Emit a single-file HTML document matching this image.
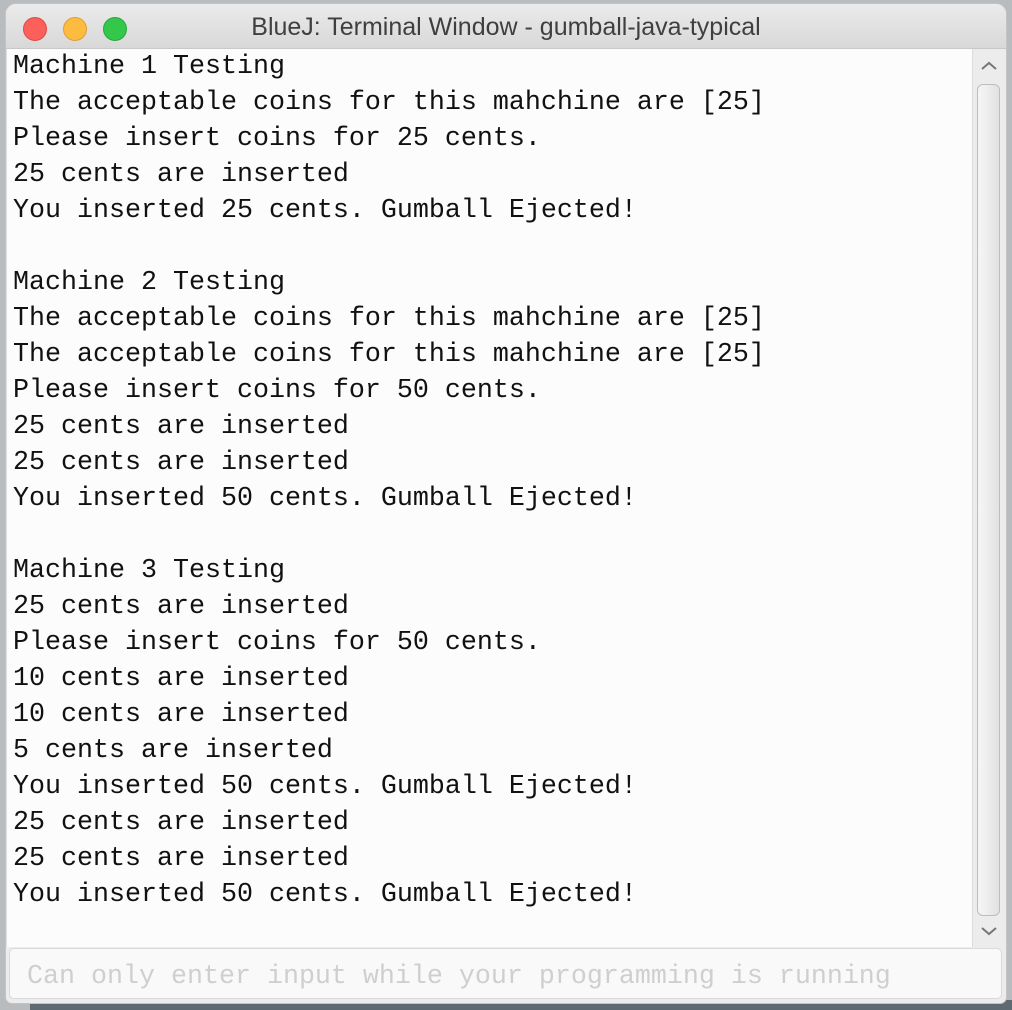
<!DOCTYPE html>
<html><head><style>
body{margin:0;width:1012px;height:1010px;background:#b9bcbf;position:relative;overflow:hidden;font-family:"Liberation Sans",sans-serif}
.bgb{position:absolute;left:30px;top:1000px;width:982px;height:10px;background:#5d6a72}
.win{position:absolute;left:6px;top:4px;width:1000px;height:999px;background:#ececec;border-radius:10px 10px 6px 6px;overflow:hidden;box-shadow:0 0 0 1px #c4c4c4}
.title{height:44px;background:linear-gradient(#ebebeb,#d8d8d8);border-bottom:1px solid #c8c8c8;text-align:center;line-height:46px;font-size:25px;color:#3f3f3f}
.dot{position:absolute;top:13px;width:22px;height:22px;border-radius:50%}
.term{position:absolute;left:0;top:45px;width:965px;height:898px;background:#fcfcfc;border-left:1px solid #ddd}
pre{margin:0;position:absolute;left:6px;top:0px;font-family:"Liberation Mono",monospace;font-size:26.67px;line-height:36px;color:#111}
.sb{position:absolute;left:966px;top:45px;width:32px;height:898px;background:#ececec;border-left:1px solid #ddd}
.thumb{position:absolute;left:4px;top:35px;width:21px;height:830px;border:1px solid #bdbdbd;border-radius:6px;background:linear-gradient(90deg,#f6f6f6,#e2e2e2)}
.inp{position:absolute;left:3px;top:944px;width:993px;height:51px;background:#f9f9f9;border:1px solid #dadada;border-radius:5px;font-family:"Liberation Mono",monospace;font-size:26.67px;color:#cfcfcf;line-height:56px;box-sizing:border-box;padding-left:17px}
</style></head><body>
<div class="bgb"></div>
<div class="win">
<div class="title">BlueJ: Terminal Window - gumball-java-typical</div>
<div class="dot" style="left:17px;background:#fc605b;border:1px solid #de4a45"></div>
<div class="dot" style="left:57px;background:#fdbc40;border:1px solid #dea034"></div>
<div class="dot" style="left:97px;background:#34c84a;border:1px solid #27a73a"></div>
<div class="term"><pre>Machine 1 Testing
The acceptable coins for this mahchine are [25]
Please insert coins for 25 cents.
25 cents are inserted
You inserted 25 cents. Gumball Ejected!

Machine 2 Testing
The acceptable coins for this mahchine are [25]
The acceptable coins for this mahchine are [25]
Please insert coins for 50 cents.
25 cents are inserted
25 cents are inserted
You inserted 50 cents. Gumball Ejected!

Machine 3 Testing
25 cents are inserted
Please insert coins for 50 cents.
10 cents are inserted
10 cents are inserted
5 cents are inserted
You inserted 50 cents. Gumball Ejected!
25 cents are inserted
25 cents are inserted
You inserted 50 cents. Gumball Ejected!</pre></div>
<div class="sb">
<svg style="position:absolute;left:8px;top:12px" width="16" height="10"><path d="M1 8 L8 2 L15 8" fill="none" stroke="#777" stroke-width="2"/></svg>
<div class="thumb"></div>
<svg style="position:absolute;left:8px;top:877px" width="16" height="10"><path d="M1 2 L8 8 L15 2" fill="none" stroke="#777" stroke-width="2"/></svg>
</div>
<div class="inp">Can only enter input while your programming is running</div>
</div>
</body></html>
